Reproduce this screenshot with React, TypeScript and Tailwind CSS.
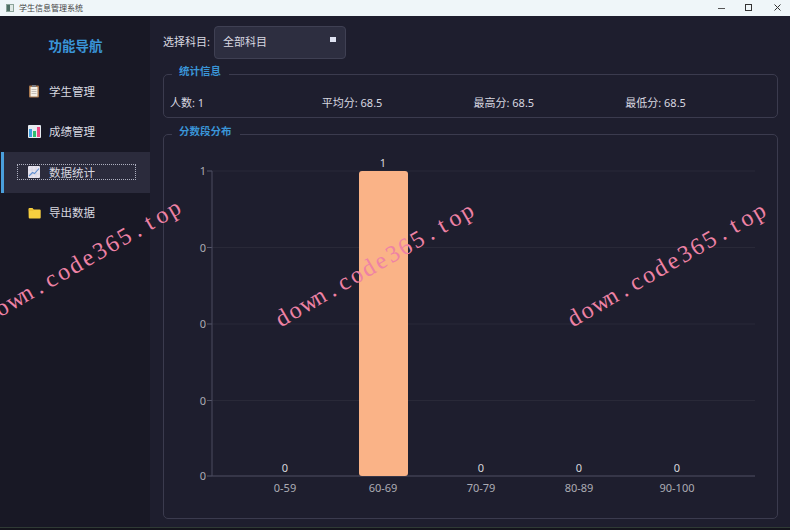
const font = "font-['Noto_Sans','Noto_Sans_CJK_SC',sans-serif]";

const navItems = [
  { label: "学生管理", icon: "clipboard" },
  { label: "成绩管理", icon: "bars" },
  { label: "数据统计", icon: "trend" },
  { label: "导出数据", icon: "folder" },
];

const stats = ["人数: 1", "平均分: 68.5", "最高分: 68.5", "最低分: 68.5"];

const buckets = [
  { label: "0-59", x: 285, value: "0" },
  { label: "60-69", x: 383, value: "1" },
  { label: "70-79", x: 481, value: "0" },
  { label: "80-89", x: 579, value: "0" },
  { label: "90-100", x: 677, value: "0" },
];

const gridLines = [
  { y: 171, label: "1" },
  { y: 247.5, label: "0" },
  { y: 324, label: "0" },
  { y: 400.5, label: "0" },
  { y: 476, label: "0" },
];

const NavIcon = ({ name }: { name: string }) => {
  if (name === "clipboard") {
    return (
      <svg width="12" height="13" viewBox="0 0 12 13">
        <rect x="1" y="0.5" width="10" height="12" rx="1" fill="#a9784e" />
        <rect x="2.5" y="2" width="7" height="9.5" fill="#f4efe6" />
        <rect x="4" y="0" width="4" height="2" fill="#77787f" />
        <path d="M3.5 4.5h5M3.5 6.5h5M3.5 8.5h5" stroke="#b7b3ad" strokeWidth="0.8" />
      </svg>
    );
  }
  if (name === "bars") {
    return (
      <svg width="13" height="13" viewBox="0 0 13 13">
        <rect width="13" height="13" rx="1" fill="#e6ebf0" />
        <rect x="1" y="4" width="3" height="8" fill="#3f9fe0" />
        <rect x="5" y="6" width="3" height="6" fill="#2fbe72" />
        <rect x="9" y="2" width="3" height="10" fill="#ee4a85" />
      </svg>
    );
  }
  if (name === "trend") {
    return (
      <svg width="12" height="12" viewBox="0 0 12 12">
        <rect width="12" height="12" rx="1" fill="#e6e3ee" />
        <path d="M0 4h12M0 8h12M4 0v12M8 0v12" stroke="#cfcbd9" strokeWidth="0.5" />
        <path d="M1 10 L4.5 6.5 L6.5 7.5 L11 2.5" stroke="#5f8fd0" strokeWidth="1.1" fill="none" />
      </svg>
    );
  }
  return (
    <svg width="13" height="12" viewBox="0 0 13 12">
      <path d="M0.5 2a1 1 0 0 1 1-1h3l1.2 1.5h6a1 1 0 0 1 1 1v7a1 1 0 0 1-1 1h-10a1 1 0 0 1-1-1z" fill="#f7cf3f" />
      <path d="M0.5 3h4.5l1-0.5" stroke="#d9a520" strokeWidth="0.6" fill="none" />
    </svg>
  );
};

const Watermark = ({ className }: { className: string }) => (
  <div
    className={`absolute flex origin-left -rotate-[30deg] font-['Liberation_Serif',serif] text-[24px] leading-none text-[#ee82a5] ${className}`}
  >
    {"down.code365.top".split("").map((ch, i) => (
      <span key={i} className="w-[14.2px] text-center">
        {ch}
      </span>
    ))}
  </div>
);

const GroupBox = ({
  title,
  titleWidth,
  className,
  children,
}: {
  title: string;
  titleWidth: string;
  className: string;
  children?: React.ReactNode;
}) => (
  <section className={`relative rounded-[5px] border border-[#3b3b4e] ${className}`}>
    <h3
      className={`absolute -top-[11px] left-[8px] h-[14px] bg-[#1e1e2e] pl-[7px] text-[10.5px] leading-[14px] font-bold text-[#3a95d8] ${titleWidth}`}
    >
      {title}
    </h3>
    {children}
  </section>
);

const Chart = () => (
  <svg width="790" height="530" className={`absolute top-0 left-0 ${font}`}>
    {gridLines.map((line) => (
      <g key={line.y}>
        <line x1="212" x2="755" y1={line.y} y2={line.y} stroke="#292938" />
        <line x1="207" x2="212" y1={line.y} y2={line.y} stroke="#55566a" />
        <text x="203" y={line.y + 4} textAnchor="middle" fontSize="11" fill="#acacb4">
          {line.label}
        </text>
      </g>
    ))}
    <line x1="212" x2="212" y1="171" y2="476" stroke="#4a4b5e" />
    <line x1="212" x2="755" y1="476" y2="476" stroke="#4a4b5e" />
    <rect x="359" y="171" width="49" height="305" rx="3" fill="#fab387" />
    {buckets.map((bucket) => (
      <g key={bucket.label}>
        <text x={bucket.x} y={bucket.value === "1" ? 167 : 472} textAnchor="middle" fontSize="11" fill="#d8d8dc">
          {bucket.value}
        </text>
        <text x={bucket.x} y="492" textAnchor="middle" fontSize="11" fill="#acacb4">
          {bucket.label}
        </text>
      </g>
    ))}
  </svg>
);

export default function App() {
  return (
    <div className={`relative flex h-[530px] w-[790px] flex-col overflow-hidden bg-[#1e1e2e] ${font}`}>
      <header className="flex h-[16px] shrink-0 items-center bg-[#eff6f9] pl-[6px]">
        <span className="flex h-[8px] w-[8px] items-center border border-[#8aa39a] bg-[#dfe9e6]">
          <span className="h-full w-[3px] bg-[#4f6f66]" />
        </span>
        <span className="ml-[5px] text-[8px] leading-none text-[#444]">学生信息管理系统</span>
        <div className="ml-auto flex items-center">
          <svg width="120" height="12" viewBox="0 0 120 12">
            <path d="M48 6.5h7" stroke="#555" />
            <rect x="75.5" y="2.5" width="6" height="6" fill="none" stroke="#333" />
            <path d="M104.5 2.5l6 6M110.5 2.5l-6 6" stroke="#333" />
          </svg>
        </div>
      </header>

      <div className="flex min-h-0 flex-1">
        <aside className="flex w-[150px] shrink-0 flex-col bg-[#181825] pl-[1px]">
          <h1 className="mt-[20px] mb-[15px] h-[20px] text-center text-[13.5px] leading-[20px] font-bold text-[#3a95d8]">
            功能导航
          </h1>
          <nav className="flex flex-col">
            {navItems.map((item) => {
              const active = item.label === "数据统计";
              return (
                <div
                  key={item.label}
                  className={`flex h-[40.5px] items-center border-l-[3px] ${
                    active ? "border-[#4a9fdc] bg-[#2b2b3c]" : "border-transparent"
                  }`}
                >
                  <div
                    className={`ml-[13px] flex h-[16px] w-[119px] items-center border border-dotted ${
                      active ? "border-[#aeb0c0]" : "border-transparent"
                    }`}
                  >
                    <span className="ml-[10px] flex w-[21px] shrink-0 items-center">
                      <NavIcon name={item.icon} />
                    </span>
                    <span className="text-[11.5px] text-[#d8d8e0]">{item.label}</span>
                  </div>
                </div>
              );
            })}
          </nav>
        </aside>

        <main className="flex flex-1 flex-col pt-[10px] pr-[12px] pb-[11px] pl-[13px]">
          <div className="flex h-[33px] items-center">
            <span className="w-[51px] text-[11px] text-[#d8d8e0]">选择科目:</span>
            <div className="flex h-full w-[132px] items-center justify-between rounded-[4px] border border-[#3f4053] bg-[#2d2e40] pr-[9px] pl-[8px]">
              <span className="text-[11px] text-[#d8d8e0]">全部科目</span>
              <span className="mb-[6px] h-[5px] w-[6px] bg-[#dfe3f2]" />
            </div>
          </div>

          <GroupBox title="统计信息" titleWidth="w-[57px]" className="mt-[15px] h-[44px]">
            <div className="grid h-full grid-cols-4 items-end pb-[6px] pl-[6px] text-[11px] text-[#d8d8e0]">
              {stats.map((stat) => (
                <span key={stat}>{stat}</span>
              ))}
            </div>
          </GroupBox>

          <GroupBox title="分数段分布" titleWidth="w-[68px]" className="mt-[16px] flex-1" />
        </main>
      </div>

      <Chart />
      <Watermark className="top-[306px] -left-[17px]" />
      <Watermark className="top-[309px] left-[276px]" />
      <Watermark className="top-[309px] left-[568px]" />
      <div className="absolute right-0 bottom-0 left-0 h-[3px] border-t border-[#2f3a35] bg-[#14141c]" />
    </div>
  );
}
